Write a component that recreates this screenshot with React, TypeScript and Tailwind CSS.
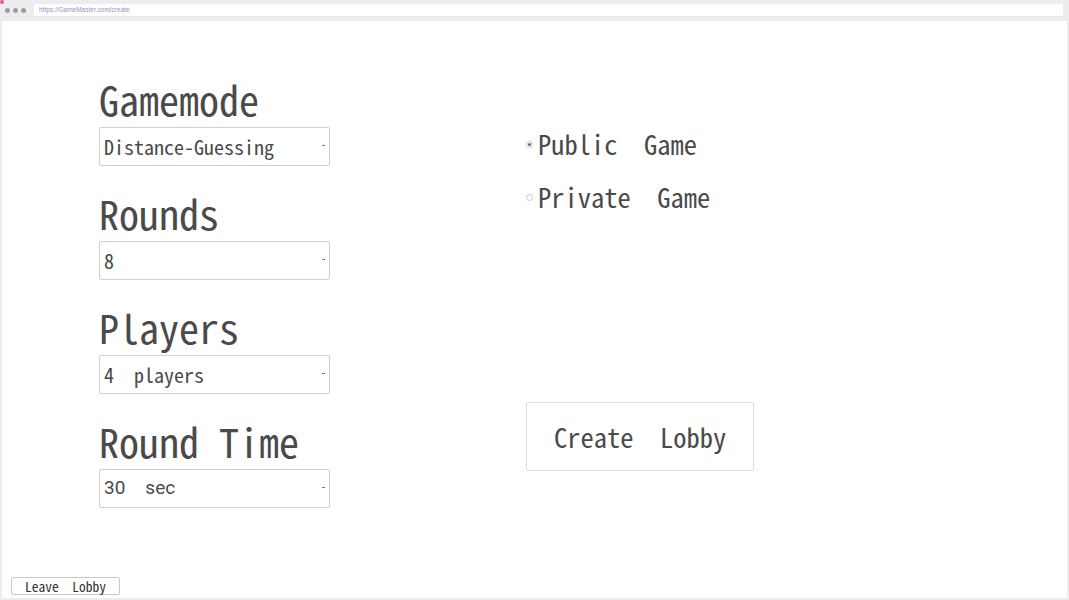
import React from 'react';

const mono = "font-['Noto_Sans_Mono_CJK_SC','Liberation_Mono',monospace]";

function Field({ label, children }: { label: string; children: React.ReactNode }) {
  return (
    <div className="flex flex-col">
      <h2 className={`${mono} h-[42px] text-[40px] leading-[35px] text-[#4a4a4a] whitespace-pre`}>{label}</h2>
      <div className="mt-[3px] flex h-[39px] w-[231px] items-center justify-between rounded-[2px] border border-[#cfcfcf] bg-white pl-[4px] pr-[4px]">
        {children}
        <span className="mb-[2px] h-px w-[3px] bg-[#777]" />
      </div>
    </div>
  );
}

function Radio({ label, checked }: { label: string; checked?: boolean }) {
  return (
    <label className="flex items-center">
      <span className="mr-[5px] flex h-[7px] w-[7px] items-center justify-center rounded-full border border-[#c8c8c8] bg-white">
        {checked && <span className="h-[3px] w-[3px] rounded-full bg-[#666]" />}
      </span>
      <span className={`${mono} whitespace-pre text-[26.5px] leading-[30px] text-[#4a4a4a]`}>{label}</span>
    </label>
  );
}

export default function App() {
  const value = `${mono} whitespace-pre text-[20px] text-[#4a4a4a]`;
  return (
    <div className="flex h-[600px] w-[1069px] flex-col bg-[#ededf0]">
      {/* browser chrome */}
      <div className="relative flex h-[21px] items-start">
        <span className="absolute left-0 top-0 h-[4px] w-[4px] rounded-full bg-[#f2537a]" />
        <div className="mt-[8px] ml-[5px] flex gap-[3px]">
          <span className="h-[5px] w-[5px] rounded-full bg-[#9c9c9c]" />
          <span className="h-[5px] w-[5px] rounded-full bg-[#9c9c9c]" />
          <span className="h-[5px] w-[5px] rounded-full bg-[#9c9c9c]" />
        </div>
        <div className="ml-[8px] mr-[6px] mt-[4px] flex h-[12px] flex-1 items-center bg-white pl-[5px]">
          <span className="font-['Liberation_Sans',sans-serif] text-[6.5px] text-[#8f95c9]">https://GameMaster.com/create</span>
        </div>
      </div>
      {/* page */}
      <div className="mx-[2px] mb-[2px] flex flex-1 flex-col bg-white">
        <div className="flex flex-1 pl-[97px] pt-[61px]">
          <div className="flex w-[427px] flex-col gap-[30px]">
            <Field label="Gamemode">
              <span className={value}>Distance-Guessing</span>
            </Field>
            <Field label="Rounds">
              <span className={value}>8</span>
            </Field>
            <Field label="Players">
              <span className={value}>4  players</span>
            </Field>
            <Field label="Round Time">
              <span className="flex font-['Roboto',sans-serif] text-[19px] text-[#4a4a4a]">
                <span>30</span>
                <span className="ml-[20px]">sec</span>
              </span>
            </Field>
          </div>
          <div className="flex flex-col pt-[47px]">
            <div className="flex flex-col gap-[23px]">
              <Radio label="Public  Game" checked />
              <Radio label="Private  Game" />
            </div>
            <button
              className={`${mono} mt-[190px] h-[69px] w-[228px] whitespace-pre rounded-[2px] border border-[#dcdcdc] bg-white text-[26.5px] text-[#4a4a4a]`}
            >
              Create  Lobby
            </button>
          </div>
        </div>
        <div className="flex pb-[3px] pl-[9px]">
          <button
            className={`${mono} h-[18px] w-[109px] whitespace-pre rounded-[2px] border border-[#c8c8c8] bg-white text-[13.5px] leading-[16px] text-[#333]`}
          >
            Leave  Lobby
          </button>
        </div>
      </div>
    </div>
  );
}
